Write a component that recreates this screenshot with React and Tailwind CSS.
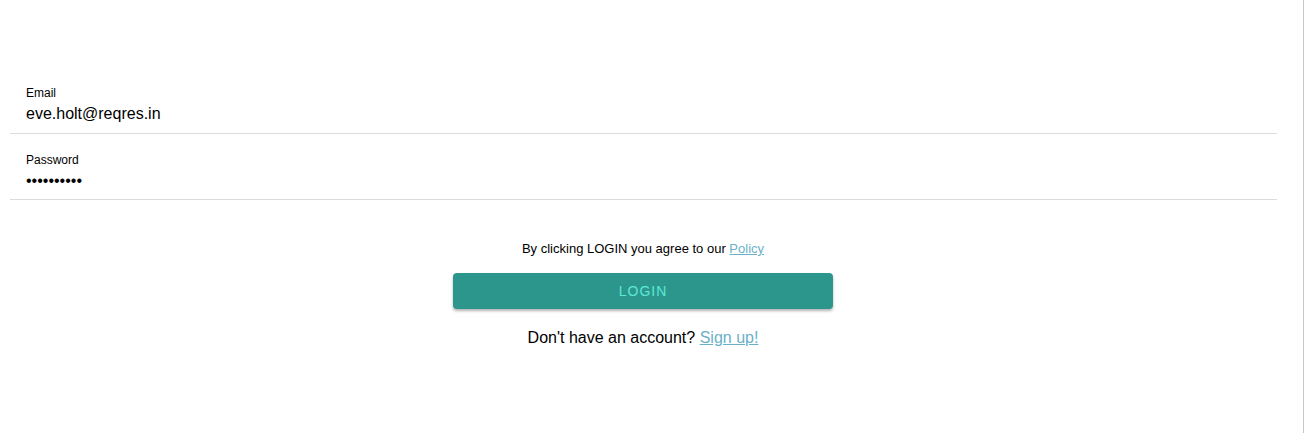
export default function App() {
  return (
    <div className="flex h-[433px] w-full bg-white font-['Liberation_Sans',Arial,sans-serif] text-black">
      <div className="flex w-[1287px] flex-col px-[10px] pt-[67px]">
        <div className="flex h-[67px] flex-col border-b border-[#dcdcdc] px-4 pt-[19px]">
          <label className="text-[12px] leading-[14px]">Email</label>
          <div className="mt-[4px] text-[16px] leading-[19px]">eve.holt@reqres.in</div>
        </div>
        <div className="flex h-[66px] flex-col border-b border-[#dcdcdc] px-4 pt-[19px]">
          <label className="text-[12px] leading-[14px]">Password</label>
          <div className="mt-[4px] text-[16px] leading-[19px]">••••••••••</div>
        </div>
        <div className="flex flex-col items-center pr-px pt-[41px]">
          <p className="text-[13px] leading-[15px]">
            By clicking LOGIN you agree to our{" "}
            <a className="text-[#6ab0c8] underline">Policy</a>
          </p>
          <button className="mt-[17px] h-9 w-[380px] rounded-[4px] bg-[#2c968c] text-[14px] tracking-[1px] text-[#5ce8d8] shadow-[0_2px_3px_rgba(0,0,0,0.3)]">
            LOGIN
          </button>
          <p className="mt-[19px] text-[16px] leading-[19px]">
            Don't have an account?{" "}
            <a className="text-[#6ab0c8] underline">Sign up!</a>
          </p>
        </div>
      </div>
      <div className="w-[16px]" />
      <div className="w-px bg-[#c8c8c8]" />
      <div className="flex-1" />
    </div>
  );
}
